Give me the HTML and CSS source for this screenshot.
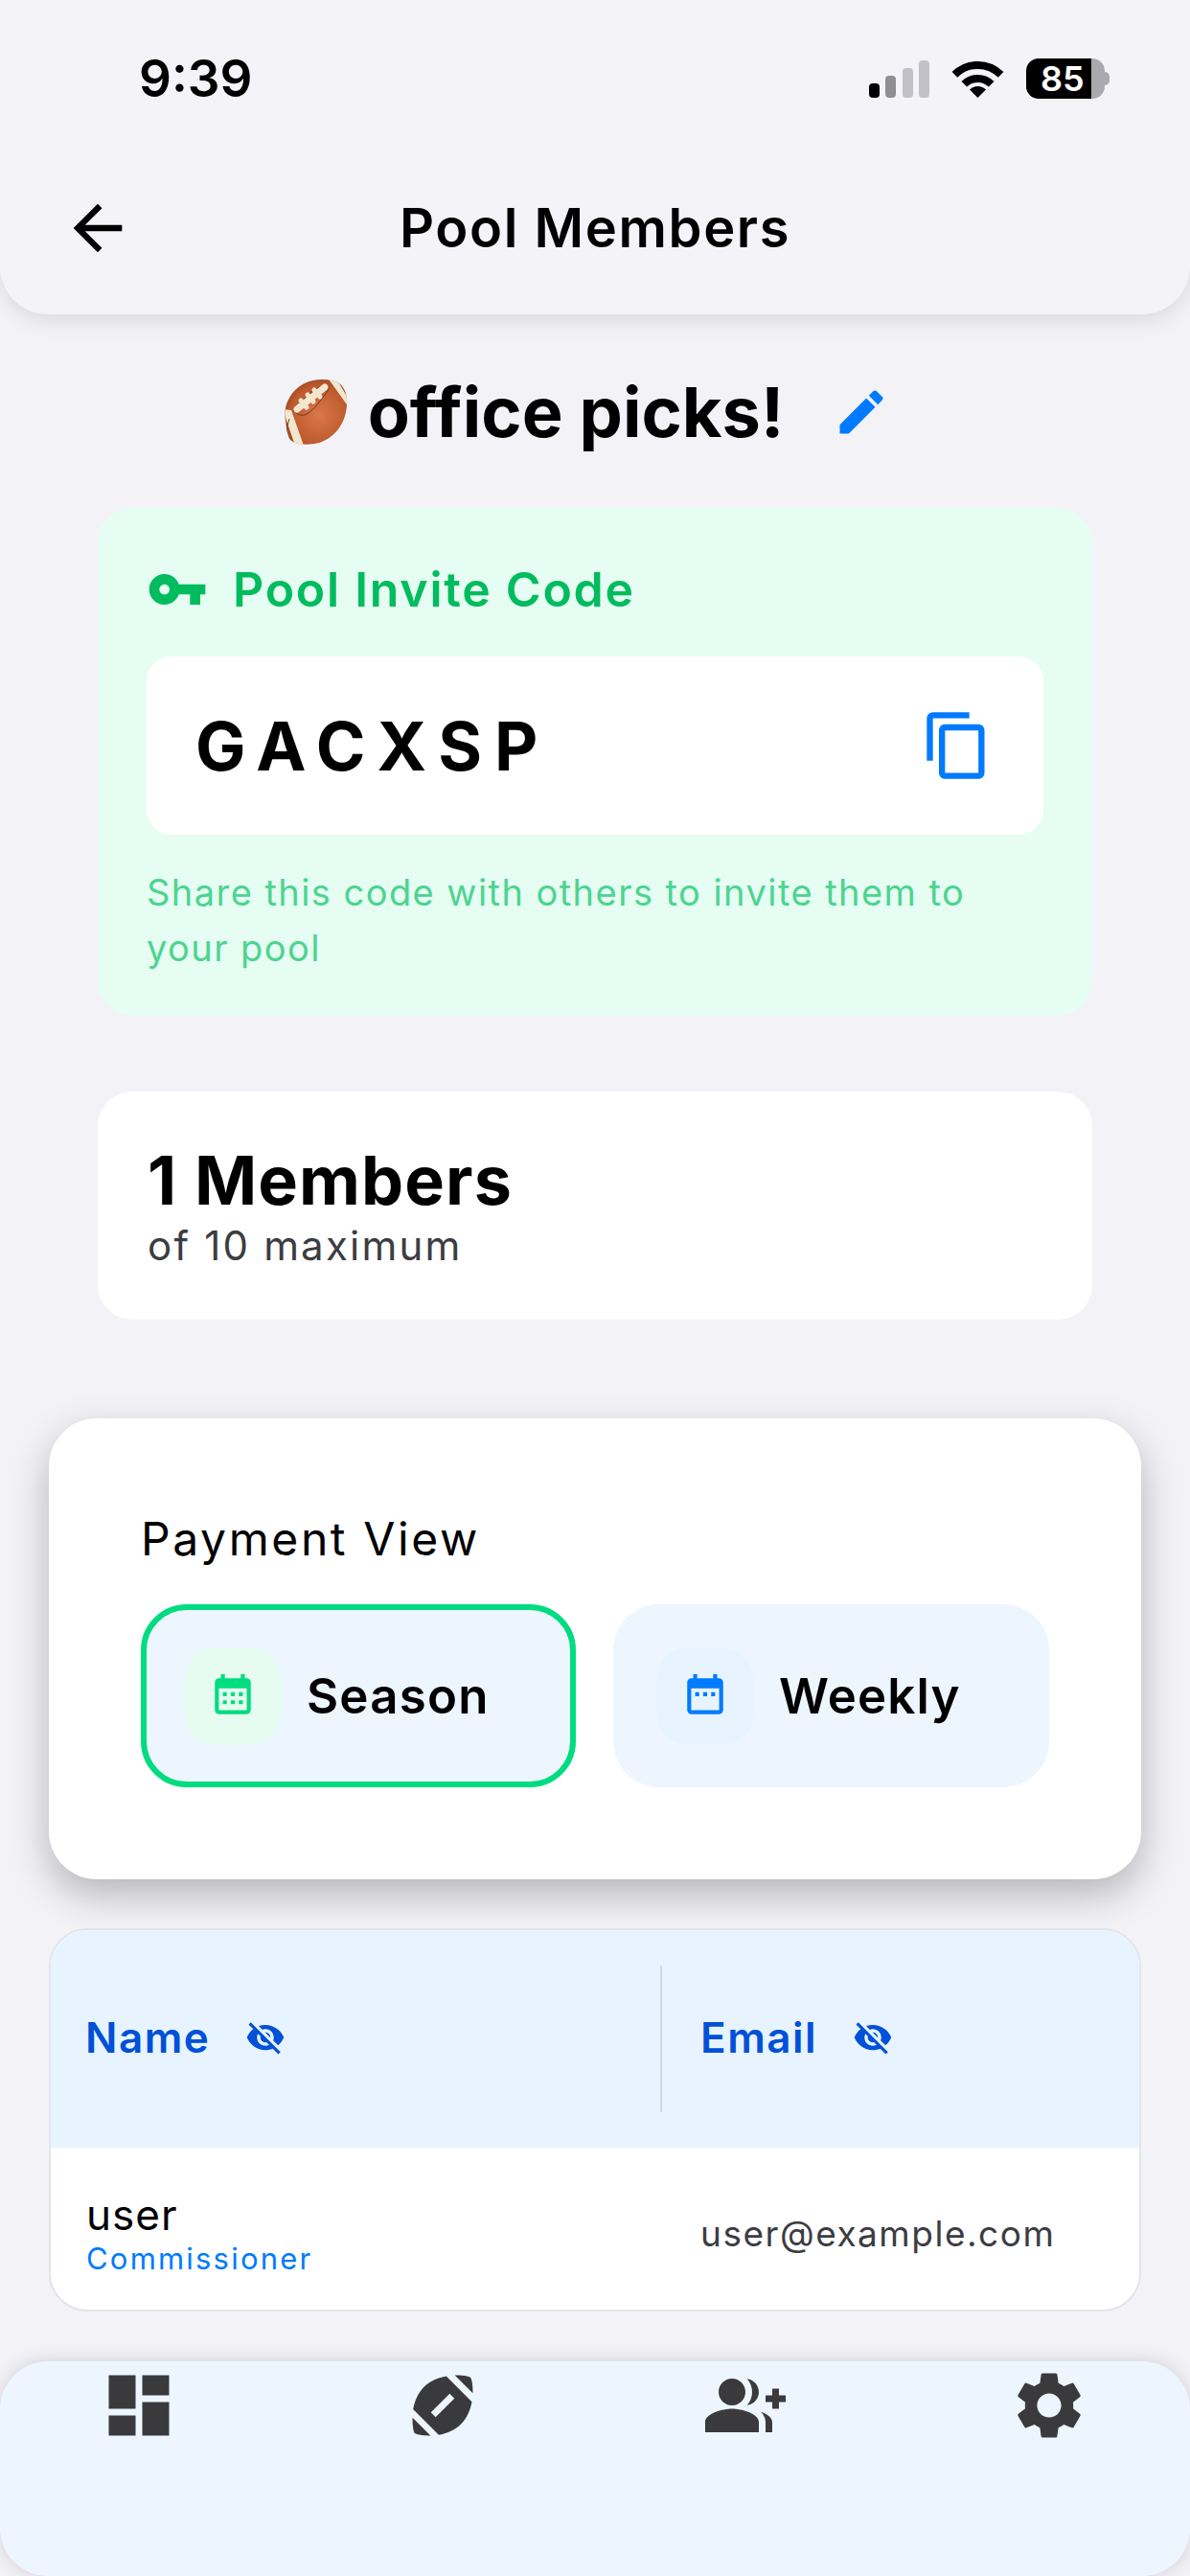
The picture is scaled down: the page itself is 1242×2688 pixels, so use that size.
FILE: index.html
```html
<!DOCTYPE html>
<html lang="en">
<head>
<meta charset="utf-8">
<title>Pool Members</title>
<link rel="stylesheet" href="styles.css">
</head>
<body>
<div class="phone">
  <header class="top">
    <div class="status">
      <span class="time">9:39</span>
      <div class="status-icons">
        <div class="signal">
          <i class="bar b1"></i><i class="bar b2"></i><i class="bar b3"></i><i class="bar b4"></i>
        </div>
        <svg class="wifi" viewBox="0 0 55 39"><path d="M3.4 14.9a34 34 0 0 1 48.2 0M13.3 24.8a20 20 0 0 1 28.4 0" fill="none" stroke="#000" stroke-width="8"/><path d="M27.5 39L19 30.5a12 12 0 0 1 17 0z" fill="#000"/></svg>
        <div class="battery"><div class="battery-body"><span class="battery-level">85</span></div><i class="battery-nub"></i></div>
      </div>
    </div>
    <div class="nav">
      <svg class="back" viewBox="0 0 24 24"><path d="M20 11H7.83l5.59-5.59L12 4l-8 8 8 8 1.41-1.41L7.83 13H20v-2z"/></svg>
      <h1 class="nav-title">Pool Members</h1>
    </div>
  </header>

  <div class="pool-title">
    <svg class="ball" viewBox="0 0 68 70">
      <defs>
        <radialGradient id="ballFill" cx="55%" cy="55%" r="65%"><stop offset="0" stop-color="#d9784a"/><stop offset=".7" stop-color="#bd5a2e"/><stop offset="1" stop-color="#8f3f1c"/></radialGradient>
        <clipPath id="ballClip"><path d="M3 44C0 30 7 14 21 6 33 -1 50 0 59 5c7 5 10 17 7 30-3 15-14 28-28 32-12 3-25 2-30-3-3-4-4-12-5-20z"/></clipPath>
      </defs>
      <path d="M3 44C0 30 7 14 21 6 33 -1 50 0 59 5c7 5 10 17 7 30-3 15-14 28-28 32-12 3-25 2-30-3-3-4-4-12-5-20z" fill="url(#ballFill)"/>
      <g clip-path="url(#ballClip)">
        <path d="M0 32l9 1 13 37-9 0zM46 -2l9 0 15 26-1 6z" fill="#f3e6cf"/>
        <path d="M7 42c-3 10-4 18-4 24" stroke="#57483e" stroke-width="1" fill="none"/>
        <path d="M13 33C22 20 34 8 46 7c4 0 2 6-2 10-7 9-13 18-21 21-6 1-10-2-10-5z" fill="none" stroke="#6e3a22" stroke-width="1"/>
      </g>
      <path d="M15 32L44 9" stroke="#f3e6cf" stroke-width="7" stroke-linecap="round"/>
      <path d="M19 23l6 7M26 17l6 7M33 12l6 7" stroke="#f3e6cf" stroke-width="5" stroke-linecap="round"/>
    </svg>
    <h2 class="pool-name">office picks!</h2>
    <svg class="edit" viewBox="0 0 24 24"><path d="M3 17.25V21h3.75L17.81 9.94l-3.75-3.75L3 17.25zM20.71 7.04c.39-.39.39-1.02 0-1.41l-2.34-2.34c-.39-.39-1.02-.39-1.41 0l-1.83 1.83 3.75 3.75 1.83-1.83z"/></svg>
  </div>

  <section class="invite">
    <div class="invite-head">
      <svg class="key" viewBox="0 0 24 24"><path d="M12.65 10C11.83 7.67 9.61 6 7 6c-3.31 0-6 2.69-6 6s2.69 6 6 6c2.61 0 4.83-1.67 5.65-4H17v4h4v-4h2v-4H12.65zM7 14c-1.1 0-2-.9-2-2s.9-2 2-2 2 .9 2 2-.9 2-2 2z"/></svg>
      <span class="invite-title">Pool Invite Code</span>
    </div>
    <div class="code-box">
      <span class="code">GACXSP</span>
      <svg class="copy" viewBox="0 0 24 24"><path d="M16 1H4c-1.1 0-2 .9-2 2v14h2V3h12V1zm3 4H8c-1.1 0-2 .9-2 2v14c0 1.1.9 2 2 2h11c1.1 0 2-.9 2-2V7c0-1.1-.9-2-2-2zm0 16H8V7h11v14z"/></svg>
    </div>
    <p class="invite-note">Share this code with others to invite them to your pool</p>
  </section>

  <section class="members">
    <div class="members-count">1 Members</div>
    <div class="members-max">of 10 maximum</div>
  </section>

  <section class="payment">
    <div class="payment-label">Payment View</div>
    <div class="payment-options">
      <div class="option option-active">
        <div class="tile tile-green">
          <svg class="cal" viewBox="0 0 24 24"><path fill-rule="evenodd" d="M19 3h-1V1h-2v2H8V1H6v2H5c-1.1 0-2 .9-2 2v14c0 1.1.9 2 2 2h14c1.1 0 2-.9 2-2V5c0-1.1-.9-2-2-2zm0 16H5V8h14v11zM7 10h2v2H7zm4 0h2v2h-2zm4 0h2v2h-2zM7 14h2v2H7zm4 0h2v2h-2zm4 0h2v2h-2z"/></svg>
        </div>
        <span class="option-text">Season</span>
      </div>
      <div class="option">
        <div class="tile tile-blue">
          <svg class="cal cal-blue" viewBox="0 0 24 24"><path fill-rule="evenodd" d="M19 3h-1V1h-2v2H8V1H6v2H5c-1.1 0-2 .9-2 2v14c0 1.1.9 2 2 2h14c1.1 0 2-.9 2-2V5c0-1.1-.9-2-2-2zm0 16H5V8h14v11zM7 10h2v2H7zm4 0h2v2h-2zm4 0h2v2h-2z"/></svg>
        </div>
        <span class="option-text">Weekly</span>
      </div>
    </div>
  </section>

  <section class="table">
    <div class="table-head">
      <div class="th">
        <span class="th-text">Name</span>
        <svg class="eye" viewBox="0 0 24 24"><path d="M12 7c2.76 0 5 2.24 5 5 0 .65-.13 1.26-.36 1.83l2.92 2.92c1.51-1.26 2.7-2.89 3.43-4.75-1.73-4.39-6-7.5-11-7.5-1.4 0-2.74.25-3.98.7l2.16 2.16C10.74 7.13 11.35 7 12 7zM2 4.27l2.28 2.28.46.46C3.08 8.3 1.78 10.02 1 12c1.73 4.39 6 7.5 11 7.5 1.55 0 3.03-.3 4.38-.84l.42.42L19.73 22 21 20.73 3.27 3 2 4.27zM7.53 9.8l1.55 1.55c-.05.21-.08.43-.08.65 0 1.66 1.34 3 3 3 .22 0 .44-.03.65-.08l1.55 1.55c-.67.33-1.41.53-2.2.53-2.76 0-5-2.24-5-5 0-.79.2-1.53.53-2.2zm4.31-.78l3.15 3.15.02-.16c0-1.66-1.34-3-3-3l-.17.01z"/></svg>
      </div>
      <i class="th-divider"></i>
      <div class="th th-email">
        <span class="th-text">Email</span>
        <svg class="eye" viewBox="0 0 24 24"><path d="M12 7c2.76 0 5 2.24 5 5 0 .65-.13 1.26-.36 1.83l2.92 2.92c1.51-1.26 2.7-2.89 3.43-4.75-1.73-4.39-6-7.5-11-7.5-1.4 0-2.74.25-3.98.7l2.16 2.16C10.74 7.13 11.35 7 12 7zM2 4.27l2.28 2.28.46.46C3.08 8.3 1.78 10.02 1 12c1.73 4.39 6 7.5 11 7.5 1.55 0 3.03-.3 4.38-.84l.42.42L19.73 22 21 20.73 3.27 3 2 4.27zM7.53 9.8l1.55 1.55c-.05.21-.08.43-.08.65 0 1.66 1.34 3 3 3 .22 0 .44-.03.65-.08l1.55 1.55c-.67.33-1.41.53-2.2.53-2.76 0-5-2.24-5-5 0-.79.2-1.53.53-2.2zm4.31-.78l3.15 3.15.02-.16c0-1.66-1.34-3-3-3l-.17.01z"/></svg>
      </div>
    </div>
    <div class="table-row">
      <div class="td-name">
        <div class="user-name">user</div>
        <div class="user-role">Commissioner</div>
      </div>
      <div class="td-email">user@example.com</div>
    </div>
  </section>

  <nav class="tabbar">
    <svg class="tab" viewBox="0 0 24 24"><path d="M3 13h8V3H3v10zm0 8h8v-6H3v6zm10 0h8V11h-8v10zm0-18v6h8V3h-8z"/></svg>
    <svg class="tab" viewBox="0 0 24 24"><path d="M3.02 15.62c-.08 2.42.32 4.34.67 4.69s2.28.76 4.69.67l-5.36-5.36zM13.08 3.28c-2.33.42-4.83 1.4-6.66 3.23s-2.81 4.33-3.23 6.66l7.63 7.63c2.33-.42 4.83-1.4 6.66-3.23s2.81-4.33 3.23-6.66l-7.63-7.63zM9.9 15.5l-1.4-1.4 5.6-5.6 1.4 1.4-5.6 5.6zm11.08-7.12c.08-2.42-.32-4.34-.67-4.69s-2.28-.76-4.69-.67l5.36 5.36z"/></svg>
    <svg class="tab" viewBox="0 0 24 24"><path d="M22 9V7h-2v2h-2v2h2v2h2v-2h2V9h-2zM8 12c2.21 0 4-1.79 4-4s-1.79-4-4-4-4 1.79-4 4 1.79 4 4 4zM8 13c-2.67 0-8 1.34-8 4v3h16v-3c0-2.66-5.33-4-8-4zM12.51 4.05C13.43 5.11 14 6.49 14 8s-.57 2.89-1.49 3.95C14.47 11.7 16 10.04 16 8s-1.53-3.7-3.49-3.95zM16.53 13.83C17.42 14.66 18 15.7 18 17v3h2v-3c0-1.45-1.59-2.51-3.47-3.17z"/></svg>
    <svg class="tab" viewBox="0 0 24 24"><path d="M19.14 12.94c.04-.3.06-.61.06-.94 0-.32-.02-.64-.07-.94l2.03-1.58c.18-.14.23-.41.12-.61l-1.92-3.32c-.12-.22-.37-.29-.59-.22l-2.39.96c-.5-.38-1.03-.7-1.62-.94l-.36-2.54c-.04-.24-.24-.41-.48-.41h-3.84c-.24 0-.43.17-.47.41l-.36 2.54c-.59.24-1.13.57-1.62.94l-2.39-.96c-.22-.08-.47 0-.59.22L2.74 8.87c-.12.21-.08.47.12.61l2.03 1.58c-.05.3-.09.63-.09.94s.02.64.07.94l-2.03 1.58c-.18.14-.23.41-.12.61l1.92 3.32c.12.22.37.29.59.22l2.39-.96c.5.38 1.03.7 1.62.94l.36 2.54c.05.24.24.41.48.41h3.84c.24 0 .44-.17.47-.41l.36-2.54c.59-.24 1.13-.56 1.62-.94l2.39.96c.22.08.47 0 .59-.22l1.92-3.32c.12-.22.07-.47-.12-.61l-2.01-1.58zM12 15.6c-1.98 0-3.6-1.62-3.6-3.6s1.62-3.6 3.6-3.6 3.6 1.62 3.6 3.6-1.62 3.6-3.6 3.6z"/></svg>
  </nav>
</div>
</body>
</html>
```

FILE: styles.css
```css
* { box-sizing: border-box; }
html, body { margin: 0; padding: 0; }
body { font-family: Inter, "Liberation Sans", sans-serif; color: #000; background: #f2f2f7; }
h1, h2, p { margin: 0; font: inherit; }
svg { display: block; flex: none; }

.phone { width: 1242px; height: 2688px; display: flex; flex-direction: column; overflow: hidden; background: #f2f2f7; }

.top { height: 328px; padding-top: 55px; background: #f3f3f8; border-radius: 0 0 50px 50px; box-shadow: 0 6px 22px rgba(0,0,0,.1); }
.status { height: 54px; padding: 0 84px 0 145px; display: flex; align-items: center; justify-content: space-between; }
.time { font-size: 53px; font-weight: 600; line-height: 54px; }
.status-icons { display: flex; align-items: center; gap: 23px; }
.signal { display: flex; align-items: flex-end; gap: 6.5px; height: 39px; }
.bar { width: 11px; border-radius: 4px; display: block; }
.b1 { height: 15px; background: #000; }
.b2 { height: 23px; background: #8e8e93; }
.b3 { height: 31px; background: #c1c1c7; }
.b4 { height: 39px; background: #c1c1c7; }
.wifi { width: 55px; height: 39px; }
.battery { display: flex; align-items: center; }
.battery-body { width: 82px; height: 42px; border-radius: 13px; overflow: hidden; background: linear-gradient(90deg, #000 82.5%, #a9a9ae 82.5%); display: flex; align-items: center; padding-left: 15px; }
.battery-level { color: #fff; font-size: 36px; font-weight: 600; line-height: 42px; }
.battery-nub { display: block; width: 5px; height: 14px; background: #a9a9ae; border-radius: 0 8px 8px 0; }

.nav { height: 100px; margin-top: 79px; display: grid; grid-template-columns: 1fr auto 1fr; align-items: center; padding: 0 64px; }
.back { width: 76px; height: 76px; fill: #000; }
.nav-title { font-size: 56px; font-weight: 600; line-height: 100px; letter-spacing: 1.6px; grid-column: 2; }

.pool-title { height: 100px; margin-top: 52px; padding-right: 18px; display: flex; align-items: center; justify-content: center; }
.ball { width: 68px; height: 70px; }
.pool-name { margin: 0 51px 0 21px; font-size: 72px; font-weight: 700; line-height: 100px; }
.edit { width: 60px; height: 60px; fill: #007aff; }

.invite { margin: 50px 102px 0; height: 530px; padding: 53px 51px 0; background: #e6fdf3; border-radius: 36px; }
.invite-head { display: flex; align-items: center; gap: 26px; height: 64px; }
.key { width: 64px; height: 64px; fill: #00bc5e; }
.invite-title { font-size: 50px; font-weight: 600; letter-spacing: 1.75px; color: #00bc5e; }
.code-box { margin-top: 38px; height: 186px; padding: 0 52px 0 51px; background: #fff; border-radius: 26px; display: flex; align-items: center; justify-content: space-between; }
.code { font-size: 70px; font-weight: 700; letter-spacing: 13px; }
.copy { width: 76px; height: 76px; fill: #007aff; }
.invite-note { margin-top: 31px; font-size: 38px; line-height: 58px; letter-spacing: 1.45px; color: #4dd490; }

.members { margin: 79px 102px 0; height: 238px; padding: 53px 52px 0; background: #fff; border-radius: 36px; }
.members-count { font-size: 70px; font-weight: 700; line-height: 80px; letter-spacing: 1.1px; }
.members-max { margin-top: 3px; font-size: 42px; line-height: 50px; letter-spacing: 2.2px; color: #3c3c43; }

.payment { margin: 103px 51px 0; height: 481px; padding: 96px 96px 0; background: #fff; border-radius: 50px; box-shadow: 0 16px 40px rgba(0,0,0,.25); }
.payment-label { font-size: 48px; line-height: 60px; letter-spacing: 2.6px; }
.payment-options { margin-top: 38px; display: grid; grid-template-columns: 454px 455px; gap: 39px; }
.option { height: 191px; padding-left: 39px; display: flex; align-items: center; gap: 26px; background: #edf5ff; border: 6px solid transparent; border-radius: 48px; }
.option-active { border-color: #00dc7f; }
.tile { width: 102px; height: 102px; border-radius: 34px; display: flex; align-items: center; justify-content: center; }
.tile-green { background: #e6fcf0; }
.tile-blue { background: #e7f4ff; }
.cal { width: 50px; height: 50px; fill: #00dc7f; }
.cal-blue { fill: #007aff; }
.option-text { font-size: 51px; font-weight: 600; letter-spacing: 1.2px; }

.table { margin: 51px 51px 0; height: 400px; border: 2px solid #e2e5ea; border-radius: 40px; overflow: hidden; background: #fff; }
.table-head { height: 227px; padding-bottom: 3px; background: #e7f4ff; display: flex; align-items: center; }
.th { display: flex; align-items: center; gap: 37px; width: 636px; padding-left: 36px; height: 100%; }
.th-email { width: auto; padding-left: 40px; gap: 37px; }
.th-divider { display: block; width: 2px; height: 153px; margin-top: 3px; background: #d3d8de; }
.th-text { font-size: 44px; font-weight: 600; letter-spacing: 1.5px; color: #0050d8; }
.eye { width: 42px; height: 42px; fill: #0050d8; }
.table-row { height: 169px; padding-top: 10px; display: flex; align-items: center; }
.td-name { width: 638px; padding-left: 37px; }
.user-name { font-size: 44px; line-height: 50px; letter-spacing: 1px; }
.user-role { margin-top: 3px; font-size: 31px; line-height: 36px; letter-spacing: 2.2px; color: #007aff; }
.td-email { padding-left: 40px; font-size: 37px; letter-spacing: 1.5px; color: #3c3c43; }

.tabbar { margin-top: 52px; height: 224px; padding: 4px 105px 0 103px; background: #edf6ff; border-radius: 50px; box-shadow: 0 0 20px rgba(0,0,0,.14); display: flex; justify-content: space-between; align-items: flex-start; }
.tab { width: 84px; height: 84px; fill: #3a3a3c; }
```
